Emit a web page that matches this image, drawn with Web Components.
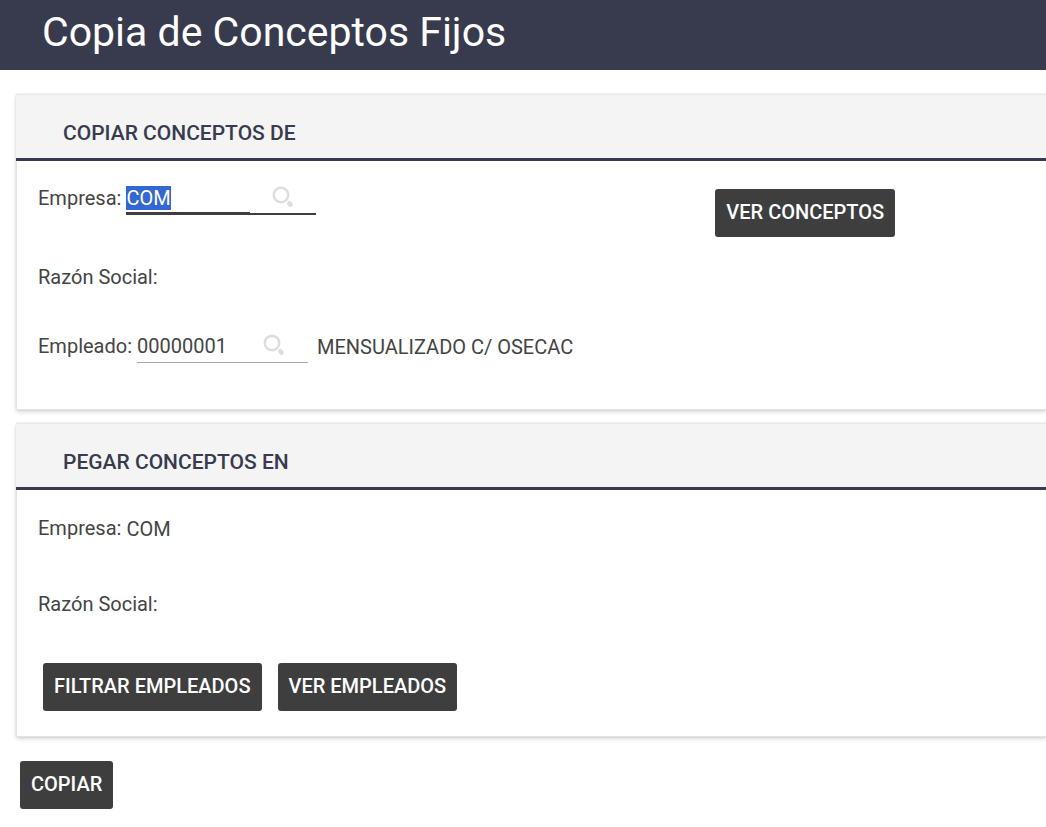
<!DOCTYPE html>
<html lang="es">
<head>
<meta charset="utf-8">
<title>Copia de Conceptos Fijos</title>
<style>
  body { margin: 0; background: #fff; color: #444; font: 400 20px/24px Roboto, sans-serif; overflow-x: hidden; }
</style>
</head>
<body>
<copy-page></copy-page>

<script>
const define = (name, html, setup) => customElements.define(name, class extends HTMLElement {
  constructor() {
    super();
    const t = document.createElement('template');
    t.innerHTML = html;
    this.attachShadow({ mode: 'open' }).append(t.content.cloneNode(true));
  }
  connectedCallback() { if (setup) setup(this, this.shadowRoot); }
});

define('app-header', `
  <style>
    :host { display: block; background: #373b4d; color: #fff; padding: 8px 42px 14px; }
    h1 { margin: 0; font-size: 41px; line-height: 48px; font-weight: 400; }
  </style>
  <h1><slot></slot></h1>`);

define('card-panel', `
  <style>
    :host { display: block; background: #fff; box-shadow: 0 2px 4px rgba(0,0,0,.16), 0 0 1px rgba(0,0,0,.3); border-radius: 2px 0 0 2px; }
    header { background: #f4f4f4; border-top: 1px solid #e8e8e8; border-bottom: 3px solid #373b4d; padding: 26px 47px 13px; }
    h2 { margin: 0; font-size: 21px; line-height: 24px; font-weight: 500; color: #373b4d; }
    .body { border-left: 1px solid #e4e4e4; border-bottom: 1px solid #e4e4e4; padding-left: 21px; }
  </style>
  <section><header><h2><slot name="title"></slot></h2></header><div class="body"><slot></slot></div></section>`);

define('dark-button', `
  <style>
    :host { display: inline-block; }
    button { display: block; border: 0; border-radius: 3px; background: #3e3e3e; color: #fff;
      font: 500 20px/24px Roboto, sans-serif; padding: 11px 11px 13px; white-space: nowrap; cursor: pointer; }
  </style>
  <button type="button"><slot></slot></button>`);

define('lookup-field', `
  <style>
    :host { display: flex; gap: 5px; line-height: 24px; }
    label { padding-top: 1px; white-space: nowrap; }
    .box { display: flex; box-sizing: border-box; height: 30px; width: 171px; border-bottom: 1px solid #aaa; }
    input { box-sizing: border-box; width: 124px; min-width: 0; height: 28px; border: 0; padding: 0 0 2px; outline: 0; background: none;
      color: inherit; font: 400 20px/24px Roboto, sans-serif; }
    input::selection { background: #3367d1; color: #fff; }
    .box:focus-within { width: 190px; border-bottom: 2px solid #3e3e3e; }
    .box:focus-within input { border-bottom: 1px solid #3e3e3e; }
    button { border: 0; padding: 0; margin: 1px 0 0 22px; background: none; height: 22px; cursor: pointer; }
    .box:not(:focus-within) button { margin-left: 2px; }
    svg { display: block; }
  </style>
  <label for="f"></label>
  <div class="box">
    <input id="f" type="text">
    <button type="button" aria-label="Buscar">
      <svg width="22" height="22" viewBox="0 0 22 22" fill="none" stroke="#dedede">
        <circle cx="9" cy="9" r="7.3" stroke-width="2.4"/>
        <path d="M17.3 17.3l1.2 1.2" stroke-width="4.6" stroke-linecap="round"/>
      </svg>
    </button>
  </div>`, (el, root) => {
    root.querySelector('label').textContent = el.getAttribute('label');
    const input = root.querySelector('input');
    input.value = el.getAttribute('value');
    if (el.hasAttribute('selected')) { input.focus(); input.select(); }
  });

define('text-field', `
  <style>
    :host { display: flex; gap: 5px; line-height: 24px; }
    .value { padding-top: 1px; }
  </style>
  <span><slot name="label"></slot></span><span class="value"><slot></slot></span>`);

define('copy-page', `
  <style>
    :host { display: block; }
    main { display: flex; flex-direction: column; gap: 13px; padding: 24px 0 16px 16px; }
    .source { display: grid; grid-template-columns: 67% auto; column-gap: 2px; justify-content: start; padding: 24px 0 46px; }
    .source dark-button { margin-top: 4px; }
    .source text-field { grid-column: 1 / -1; margin-top: 28px; }
    .employee { grid-column: 1 / -1; display: flex; gap: 9px; margin-top: 44px; }
    .employee span { padding-top: 2px; }
    .target { padding: 26px 0 25px; }
    .target text-field + text-field { margin-top: 51px; }
    .actions { display: flex; gap: 16px; padding: 47px 0 0 5px; }
    .submit { padding: 11px 4px 0; }
  </style>
  <app-header>Copia de Conceptos Fijos</app-header>
  <main>
    <card-panel>
      <span slot="title">COPIAR CONCEPTOS DE</span>
      <div class="source">
        <lookup-field label="Empresa:" value="COM" selected></lookup-field>
        <div><dark-button>VER CONCEPTOS</dark-button></div>
        <text-field><span slot="label">Razón Social:</span></text-field>
        <div class="employee">
          <lookup-field label="Empleado:" value="00000001"></lookup-field>
          <span>MENSUALIZADO C/ OSECAC</span>
        </div>
      </div>
    </card-panel>
    <card-panel>
      <span slot="title">PEGAR CONCEPTOS EN</span>
      <div class="target">
        <text-field><span slot="label">Empresa:</span>COM</text-field>
        <text-field><span slot="label">Razón Social:</span></text-field>
        <div class="actions">
          <dark-button>FILTRAR EMPLEADOS</dark-button>
          <dark-button>VER EMPLEADOS</dark-button>
        </div>
      </div>
    </card-panel>
    <div class="submit"><dark-button>COPIAR</dark-button></div>
  </main>`);
</script>
</body>
</html>
